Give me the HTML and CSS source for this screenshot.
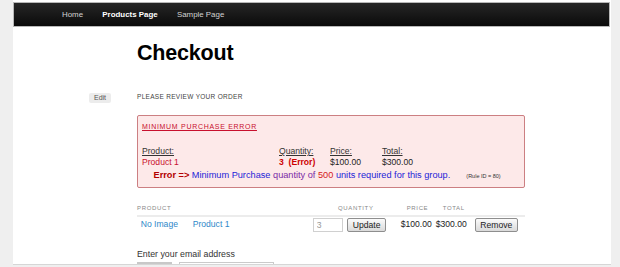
FILE: index.html
```html
<!DOCTYPE html>
<html lang="en">
<head>
<meta charset="utf-8">
<title>Checkout</title>
<link rel="stylesheet" href="styles.css">
</head>
<body>
<div class="page">
  <nav class="topnav">
    <a class="nav-link">Home</a>
    <a class="nav-link active">Products Page</a>
    <a class="nav-link">Sample Page</a>
  </nav>
  <div class="layout">
    <h1 class="title">Checkout</h1>
    <span class="edit-btn">Edit</span>
    <h2 class="review">PLEASE REVIEW YOUR ORDER</h2>
    <div class="main">
      <div class="err-box">
        <div class="err-title">MINIMUM PURCHASE ERROR</div>
        <div class="err-grid">
          <span class="err-head">Product:</span>
          <span class="err-head">Quantity:</span>
          <span class="err-head">Price:</span>
          <span class="err-head">Total:</span>
          <span class="err-red">Product 1</span>
          <span class="err-qty">3&nbsp;&nbsp;(Error)</span>
          <span class="err-val">$100.00</span>
          <span class="err-val">$300.00</span>
        </div>
        <div class="err-msg"><b class="err-label">Error =&gt;</b> <span class="c-blue">Minimum Purchase</span> <span class="c-purple">quantity of</span> <span class="c-red">500</span> <span class="c-blue">units required for this group.</span><span class="rule">(Rule ID = 80)</span></div>
      </div>

      <div class="cart">
        <div class="th">PRODUCT</div>
        <div class="th"></div>
        <div class="th th-qty">QUANTITY</div>
        <div class="th th-price">PRICE</div>
        <div class="th th-total">TOTAL</div>
        <div class="th"></div>

        <div class="td td-img"><a class="cell-link">No Image</a></div>
        <div class="td"><a class="cell-link">Product 1</a></div>
        <div class="td"><input class="qty-input" type="text" value="3"><button class="btn btn-update">Update</button></div>
        <div class="td">$100.00</div>
        <div class="td">$300.00</div>
        <div class="td"><button class="btn btn-remove">Remove</button></div>
      </div>

      <div class="email-label">Enter your email address</div>
      <div class="email-row">
        <span class="email-tag"></span>
        <input class="email-input" type="text">
      </div>
    </div>
  </div>
</div>
</body>
</html>
```
FILE: styles.css
```css
* { box-sizing: border-box; }

body {
  margin: 0;
  background: #efefef;
  font-family: "Liberation Sans", Arial, sans-serif;
}

.page {
  margin-left: 13px;
  width: 598px;
  height: 265px;
  padding-top: 2px;
  background: #fff;
  border-bottom: 1px solid #d6d6d6;
  overflow: hidden;
}

.topnav {
  height: 25px;
  margin-right: 1px;
  border: 1px solid #b8b8b8;
  background: linear-gradient(#262626, #0a0a0a);
  display: flex;
  align-items: center;
  padding: 1px 0 0 48px;
  gap: 19.3px;
}

.nav-link {
  font-size: 7.9px;
  line-height: 10px;
  color: #d2d2d2;
}

.nav-link.active {
  color: #fff;
  font-weight: bold;
}

.layout {
  display: grid;
  grid-template-columns: 76px 22px 26px 388px;
}

.title {
  grid-row: 1;
  grid-column: 4;
  margin: 12.5px 0 0;
  font-size: 21.5px;
  line-height: 26px;
  letter-spacing: -0.2px;
  font-weight: bold;
  color: #000;
}

.edit-btn {
  grid-row: 2;
  grid-column: 2;
  margin-top: 27.5px;
  height: 10px;
  background: #ececec;
  border-radius: 2px;
  font-size: 7px;
  line-height: 10px;
  color: #555;
  text-align: center;
}

.review {
  grid-row: 2;
  grid-column: 4;
  margin: 27.5px 0 0;
  font-size: 6.5px;
  line-height: 8px;
  letter-spacing: 0.3px;
  font-weight: normal;
  color: #444;
}

.main {
  grid-row: 3;
  grid-column: 4;
}

.err-box {
  margin-top: 12px;
  height: 73px;
  border: 1px solid #cc7f82;
  border-radius: 2px;
  background: #fde9e9;
  padding: 6.3px 4px 0;
}

.err-title {
  font-size: 7px;
  line-height: 10px;
  letter-spacing: 0.7px;
  color: #c8102e;
  text-decoration: underline;
}

.err-grid {
  margin-top: 13.7px;
  display: grid;
  grid-template-columns: 137px 51px 52px 1fr;
  font-size: 8.6px;
  line-height: 11px;
}

.err-head {
  color: #333;
  text-decoration: underline;
}

.err-red { color: #c8102e; }
.err-qty { color: #c00; font-weight: bold; }
.err-val { color: #222; }

.err-msg {
  margin-top: 1px;
  padding-left: 11.5px;
  font-size: 9.2px;
  line-height: 12px;
  white-space: nowrap;
}

.err-label { color: #b30000; }
.c-blue { color: #2424d8; }
.c-purple { color: #7a2aa6; }
.c-red { color: #d42020; }

.rule {
  margin-left: 16px;
  font-size: 5.5px;
  color: #333;
}

.cart {
  margin-top: 16px;
  display: grid;
  grid-template-columns: 53px 120px 88px 35px 39px 53px;
}

.th {
  height: 13px;
  padding-bottom: 3px;
  border-bottom: 2px solid #ececec;
  font-size: 6px;
  line-height: 8px;
  letter-spacing: 0.65px;
  color: #888;
}

.th-qty { padding-left: 28px; }
.th-price { padding-left: 8.7px; }
.th-total { padding-left: 9.7px; }

.td {
  height: 15px;
  display: flex;
  align-items: center;
  padding-left: 2.7px;
  font-size: 8.6px;
  line-height: 11px;
  color: #222;
}

.td-img { padding-left: 3.7px; }

.cell-link { color: #2f88c9; }

.qty-input {
  width: 30px;
  height: 14px;
  margin: 0;
  padding: 0 3px;
  border: 1px solid #d0d0d0;
  font-family: inherit;
  font-size: 8.6px;
  color: #999;
  background: #fff;
}

.btn {
  height: 14px;
  margin: 0;
  padding: 0;
  border: 1px solid #8e8e8e;
  border-radius: 2px;
  background: linear-gradient(#fbfbfb, #dadada);
  font-family: inherit;
  font-size: 8.6px;
  line-height: 12px;
  color: #222;
}

.btn-update { width: 38.7px; margin-left: 4.6px; }
.btn-remove { width: 43.3px; }

.email-label {
  margin-top: 17.2px;
  font-size: 8.8px;
  line-height: 11px;
  color: #333;
}

.email-row {
  margin-top: 1.5px;
  display: flex;
  gap: 6.6px;
  height: 12px;
}

.email-tag {
  width: 35.4px;
  background: #c8c8c8;
}

.email-input {
  width: 95px;
  height: 12px;
  margin: 0;
  padding: 0;
  border: 1px solid #cacaca;
  background: #fff;
}
```
